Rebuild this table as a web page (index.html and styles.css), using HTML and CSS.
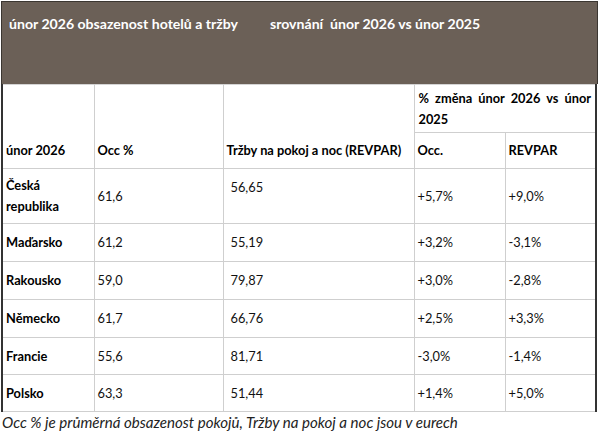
FILE: index.html
```html
<!DOCTYPE html>
<html lang="cs">
<head>
<meta charset="utf-8">
<link rel="stylesheet" href="styles.css">
</head>
<body>
<div class="sheet">
  <div class="banner">
    <span class="banner-left">únor 2026 obsazenost hotelů a tržby</span>
    <span class="banner-right">srovnání&nbsp; únor 2026 vs únor 2025</span>
  </div>
  <table class="grid">
    <colgroup>
      <col class="c1"><col class="c2"><col class="c3"><col class="c4"><col class="c5">
    </colgroup>
    <thead>
      <tr class="h1">
        <th rowspan="2" class="first bottom">únor 2026</th>
        <th rowspan="2" class="bottom">Occ %</th>
        <th rowspan="2" class="bottom">Tržby na pokoj a noc (REVPAR)</th>
        <th colspan="2" class="last change">% změna únor 2026 vs únor 2025</th>
      </tr>
      <tr class="h2">
        <th>Occ.</th>
        <th class="last">REVPAR</th>
      </tr>
    </thead>
    <tbody>
      <tr class="tall">
        <th class="first">Česká<br>republika</th><td>61,6</td><td class="rev">56,65</td><td>+5,7%</td><td class="last">+9,0%</td>
      </tr>
      <tr>
        <th class="first">Maďarsko</th><td>61,2</td><td class="rev">55,19</td><td>+3,2%</td><td class="last">-3,1%</td>
      </tr>
      <tr>
        <th class="first">Rakousko</th><td>59,0</td><td class="rev">79,87</td><td>+3,0%</td><td class="last">-2,8%</td>
      </tr>
      <tr>
        <th class="first">Německo</th><td>61,7</td><td class="rev">66,76</td><td>+2,5%</td><td class="last">+3,3%</td>
      </tr>
      <tr class="short">
        <th class="first">Francie</th><td>55,6</td><td class="rev">81,71</td><td>-3,0%</td><td class="last">-1,4%</td>
      </tr>
      <tr class="short">
        <th class="first">Polsko</th><td>63,3</td><td class="rev">51,44</td><td>+1,4%</td><td class="last">+5,0%</td>
      </tr>
    </tbody>
  </table>
  <p class="note">Occ % je průměrná obsazenost pokojů, Tržby na pokoj a noc jsou v eurech</p>
</div>
</body>
</html>
```

FILE: styles.css
```css
html, body {
  margin: 0;
  padding: 0;
  background: #ffffff;
}

.sheet {
  padding: 1px 0 0 1px;
  font-family: Lato, "Open Sans", sans-serif;
  color: #000000;
}

.banner {
  box-sizing: border-box;
  width: 597px;
  height: 83px;
  background: #6b6057;
  border: 1px solid #3b3631;
  border-bottom: none;
  color: #ffffff;
  font-weight: 700;
  font-size: 14.1px;
  padding: 13px 0 0 7px;
  display: flex;
  white-space: nowrap;
}

.banner-left {
  width: 261px;
}

.grid {
  border-collapse: collapse;
  table-layout: fixed;
  width: 594px;
  font-size: 12.8px;
}

.c1 { width: 92px; }
.c2 { width: 129px; }
.c3 { width: 191px; }
.c4 { width: 91px; }
.c5 { width: 91px; }

.grid th,
.grid td {
  border: 1px solid #cfcfcf;
  padding: 0 3px;
  text-align: left;
  vertical-align: middle;
  line-height: 21px;
}

.grid th {
  font-weight: 700;
}

.grid td {
  font-weight: 400;
  color: #111111;
}

.grid .first {
  border-left: 2px solid #333333;
}

.grid .last {
  border-right: 2px solid #333333;
}

.grid thead tr:first-child th {
  border-top: 1px solid #d4d4d4;
}

.h1 { height: 48px; }
.h2 { height: 36px; }

.grid th.bottom {
  vertical-align: bottom;
  padding-bottom: 7px;
}

.grid th.change {
  vertical-align: top;
  text-align: justify;
  text-align-last: left;
  padding: 3px 4px 0 4px;
}

.grid tbody tr { height: 38px; }
.grid tbody tr.tall { height: 55px; }
.grid tbody tr.short { height: 37px; }

.grid td.rev {
  vertical-align: top;
  padding-top: 8px;
  padding-left: 7px;
}

.note {
  margin: 1px 0 0 1px;
  font-style: italic;
  font-size: 15.1px;
  color: #222222;
  line-height: 18px;
}
```
